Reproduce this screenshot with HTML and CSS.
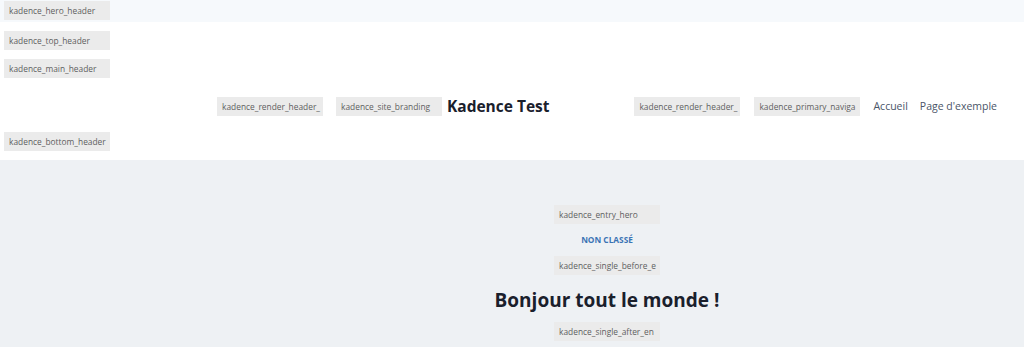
FILE: index.html
```html
<!DOCTYPE html>
<html lang="fr">
<head>
    <meta charset="UTF-8">
    <meta name="viewport" content="width=device-width, initial-scale=1.0">
    <title>Kadence Test</title>
    <link rel="stylesheet" href="styles.css">
</head>
<body>
    <div class="hero-band">
        <span class="hook">kadence_hero_header</span>
    </div>

    <header class="site-header">
        <span class="hook">kadence_top_header</span>
        <span class="hook">kadence_main_header</span>

        <div class="main-row">
            <div class="row-left">
                <span class="hook">kadence_render_header_</span>
                <span class="hook">kadence_site_branding</span>
                <span class="site-title">Kadence Test</span>
            </div>
            <div class="row-right">
                <span class="hook">kadence_render_header_</span>
                <span class="hook">kadence_primary_naviga</span>
                <nav class="menu">
                    <a href="#">Accueil</a>
                    <a href="#">Page d'exemple</a>
                </nav>
            </div>
        </div>

        <span class="hook">kadence_bottom_header</span>
    </header>

    <main class="entry-hero">
        <span class="hook">kadence_entry_hero</span>
        <a class="category" href="#">NON CLASSÉ</a>
        <span class="hook">kadence_single_before_e</span>
        <h1 class="entry-title">Bonjour tout le monde !</h1>
        <span class="hook">kadence_single_after_en</span>
    </main>
</body>
</html>
```

FILE: styles.css
```css
/* Base */
* {
    margin: 0;
    padding: 0;
    box-sizing: border-box;
    font-family: 'Open Sans', 'Noto Sans', sans-serif;
}

body {
    background: #eef1f4;
    color: #1a202c;
    overflow: hidden;
}

a {
    text-decoration: none;
}

/* Hook labels */
.hook {
    display: block;
    width: 106px;
    height: 19px;
    line-height: 19px;
    padding-left: 5px;
    background: #ebebeb;
    color: #5f5f5f;
    font-size: 8.4px;
    white-space: nowrap;
    flex-shrink: 0;
}

/* Hero band */
.hero-band {
    background: #f6f9fc;
    height: 22px;
    padding: 1px 4px;
}

/* Header */
.site-header {
    background: #fff;
    height: 138px;
    padding: 9px 4px 0;
    display: flex;
    flex-direction: column;
    gap: 9px;
}

.main-row {
    display: flex;
    justify-content: space-between;
    align-items: center;
    height: 20px;
    margin: 9px 0 7px;
    padding: 0 23px 0 213px;
}

.row-left,
.row-right {
    display: flex;
    align-items: center;
}

.row-left .hook:first-child {
    margin-right: 13px;
}

.site-title {
    margin-left: 5px;
    font-size: 15.5px;
    font-weight: 700;
    color: #1a202c;
}

.row-right .hook:first-child {
    margin-right: 14px;
}

.menu {
    display: flex;
    gap: 12px;
    margin-left: 13px;
}

.menu a {
    color: #4a5568;
    font-size: 10.5px;
}

/* Entry hero */
.entry-hero {
    display: flex;
    flex-direction: column;
    align-items: center;
    padding-top: 45px;
    padding-left: 190px;
}

.category {
    margin: 8px 0 9px;
    height: 15px;
    line-height: 15px;
    font-size: 8.3px;
    font-weight: 700;
    color: #3b74b4;
}

.entry-title {
    margin: 12px 0 9px;
    height: 26px;
    line-height: 26px;
    font-size: 19px;
    font-weight: 700;
    color: #1a202c;
}
```
